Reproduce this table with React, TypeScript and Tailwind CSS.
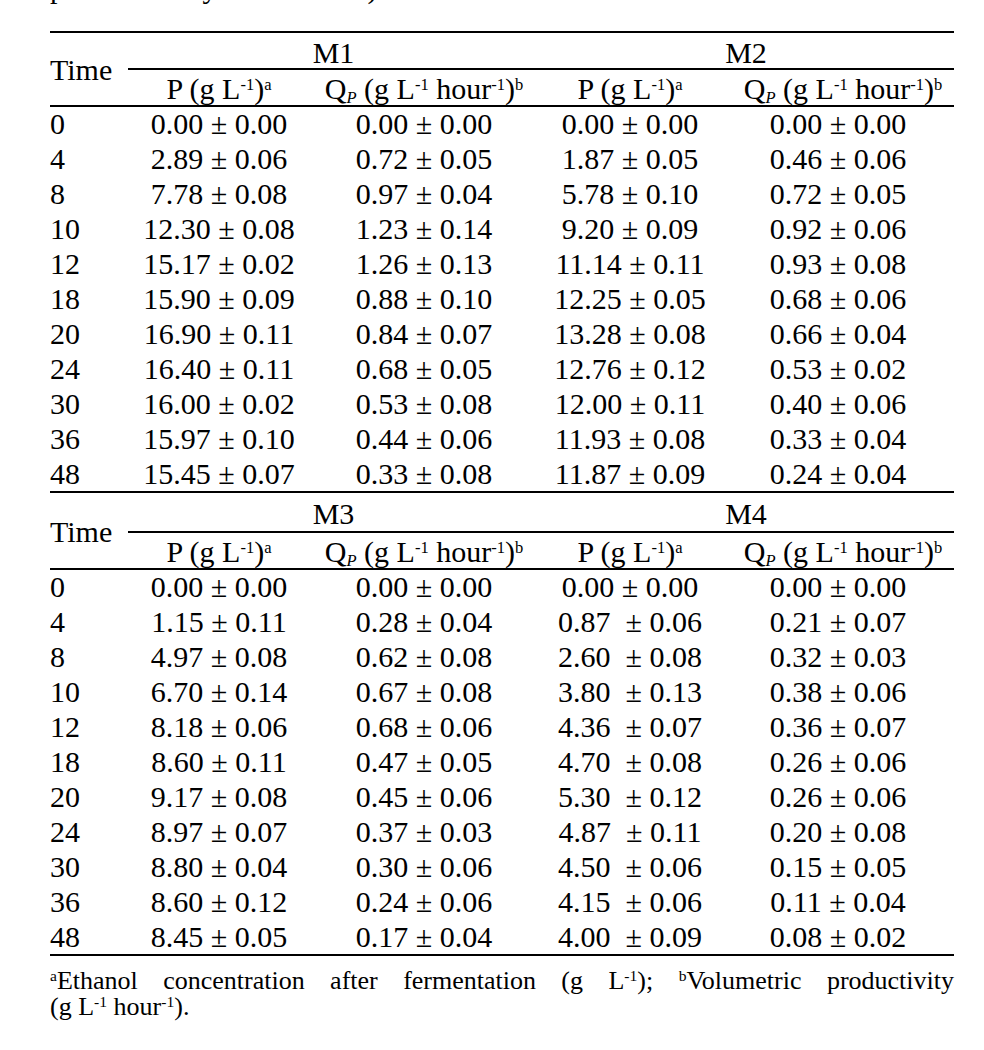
import React from 'react';

type Row = [string, string, string, string, string];

const blockA: Row[] = [
  ['0', '0.00 ± 0.00', '0.00 ± 0.00', '0.00 ± 0.00', '0.00 ± 0.00'],
  ['4', '2.89 ± 0.06', '0.72 ± 0.05', '1.87 ± 0.05', '0.46 ± 0.06'],
  ['8', '7.78 ± 0.08', '0.97 ± 0.04', '5.78 ± 0.10', '0.72 ± 0.05'],
  ['10', '12.30 ± 0.08', '1.23 ± 0.14', '9.20 ± 0.09', '0.92 ± 0.06'],
  ['12', '15.17 ± 0.02', '1.26 ± 0.13', '11.14 ± 0.11', '0.93 ± 0.08'],
  ['18', '15.90 ± 0.09', '0.88 ± 0.10', '12.25 ± 0.05', '0.68 ± 0.06'],
  ['20', '16.90 ± 0.11', '0.84 ± 0.07', '13.28 ± 0.08', '0.66 ± 0.04'],
  ['24', '16.40 ± 0.11', '0.68 ± 0.05', '12.76 ± 0.12', '0.53 ± 0.02'],
  ['30', '16.00 ± 0.02', '0.53 ± 0.08', '12.00 ± 0.11', '0.40 ± 0.06'],
  ['36', '15.97 ± 0.10', '0.44 ± 0.06', '11.93 ± 0.08', '0.33 ± 0.04'],
  ['48', '15.45 ± 0.07', '0.33 ± 0.08', '11.87 ± 0.09', '0.24 ± 0.04'],
];

const blockB: Row[] = [
  ['0', '0.00 ± 0.00', '0.00 ± 0.00', '0.00 ± 0.00', '0.00 ± 0.00'],
  ['4', '1.15 ± 0.11', '0.28 ± 0.04', '0.87  ± 0.06', '0.21 ± 0.07'],
  ['8', '4.97 ± 0.08', '0.62 ± 0.08', '2.60  ± 0.08', '0.32 ± 0.03'],
  ['10', '6.70 ± 0.14', '0.67 ± 0.08', '3.80  ± 0.13', '0.38 ± 0.06'],
  ['12', '8.18 ± 0.06', '0.68 ± 0.06', '4.36  ± 0.07', '0.36 ± 0.07'],
  ['18', '8.60 ± 0.11', '0.47 ± 0.05', '4.70  ± 0.08', '0.26 ± 0.06'],
  ['20', '9.17 ± 0.08', '0.45 ± 0.06', '5.30  ± 0.12', '0.26 ± 0.06'],
  ['24', '8.97 ± 0.07', '0.37 ± 0.03', '4.87  ± 0.11', '0.20 ± 0.08'],
  ['30', '8.80 ± 0.04', '0.30 ± 0.06', '4.50  ± 0.06', '0.15 ± 0.05'],
  ['36', '8.60 ± 0.12', '0.24 ± 0.06', '4.15  ± 0.06', '0.11 ± 0.04'],
  ['48', '8.45 ± 0.05', '0.17 ± 0.04', '4.00  ± 0.09', '0.08 ± 0.02'],
];

const PHead = () => (
  <>
    P (g L<sup className="text-[55%]">-1</sup>)<sup className="text-[55%]">a</sup>
  </>
);

const QHead = () => (
  <>
    Q<sub className="text-[55%] italic">P</sub> (g L<sup className="text-[55%]">-1</sup> hour
    <sup className="text-[55%]">-1</sup>)<sup className="text-[55%]">b</sup>
  </>
);

const Block = ({ left, right, rows, first }: { left: string; right: string; rows: Row[]; first?: boolean }) => (
  <table className="w-[904px] table-fixed border-collapse">
    <colgroup>
      <col className="w-[78px]" />
      <col className="w-[182px]" />
      <col className="w-[228px]" />
      <col className="w-[184px]" />
      <col className="w-[232px]" />
    </colgroup>
    <thead>
      <tr className={first ? 'h-[37px] border-t-2 border-black' : 'h-[39px]'}>
        <td rowSpan={2} className="text-left align-middle pt-[2px]">Time</td>
        <td colSpan={2} className="text-center align-middle border-b-2 border-black pt-[4px] pl-[1px]">{left}</td>
        <td colSpan={2} className="text-center align-middle border-b-2 border-black pt-[4px]">{right}</td>
      </tr>
      <tr className="h-[37px] border-b-2 border-black">
        <td className="text-center align-middle pt-[2px]"><PHead /></td>
        <td className="text-center align-middle pt-[2px]"><QHead /></td>
        <td className="text-center align-middle pt-[2px]"><PHead /></td>
        <td className="text-center align-middle pt-[2px] pl-[10px]"><QHead /></td>
      </tr>
    </thead>
    <tbody>
      {rows.map((r, i) => (
        <tr key={i} className={i === rows.length - 1 ? 'h-[36px] border-b-2 border-black' : 'h-[35px]'}>
          <td className="text-left align-middle">{r[0]}</td>
          {r.slice(1).map((c, j) => (
            <td key={j} className="text-center align-middle whitespace-pre">{c}</td>
          ))}
        </tr>
      ))}
    </tbody>
  </table>
);

export default function App() {
  return (
    <div className="bg-white min-h-[1050px] w-[984px] text-black font-['Liberation_Serif',serif]">
      <div className="pl-[50px]">
        <div className="h-[9px] overflow-hidden">
          <p className="-mt-[27px] text-[30px] leading-[30px] whitespace-nowrap">production by the medium)</p>
        </div>
        <div className="mt-[22px] text-[30px] leading-none">
          <Block left="M1" right="M2" rows={blockA} first />
          <Block left="M3" right="M4" rows={blockB} />
        </div>
        <p className="w-[904px] mt-[12px] text-[26px] leading-[26px] text-justify">
          <sup className="text-[60%]">a</sup>Ethanol concentration after fermentation (g L
          <sup className="text-[60%]">-1</sup>); <sup className="text-[60%]">b</sup>Volumetric productivity{' '}
          <span className="whitespace-nowrap">
            (g L<sup className="text-[60%]">-1</sup> hour<sup className="text-[60%]">-1</sup>).
          </span>
        </p>
      </div>
    </div>
  );
}
